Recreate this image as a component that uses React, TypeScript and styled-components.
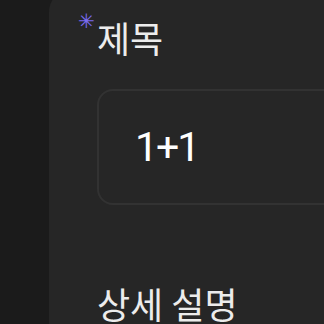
import styled, { createGlobalStyle } from "styled-components";

const GlobalStyle = createGlobalStyle`
  html, body {
    margin: 0;
    padding: 0;
    background: #1b1b1b;
    overflow: hidden;
  }
  body {
    font-family: "Noto Sans CJK KR", "Noto Sans", sans-serif;
  }
`;

const Screen = styled.div`
  display: flex;
  width: 324px;
  height: 324px;
  overflow: hidden;
  background: #1b1b1b;
`;

const SideStrip = styled.div`
  flex: 0 0 49px;
  background: #1b1b1b;
`;

const Panel = styled.div`
  flex: 0 0 640px;
  margin-top: -10px;
  padding: 21px 48px 0 48px;
  background: #262626;
  border-top-left-radius: 22px;
  display: flex;
  flex-direction: column;
`;

const Field = styled.div`
  display: flex;
  flex-direction: column;
  gap: 26px;
`;

const Label = styled.label`
  position: relative;
  font-size: 36px;
  line-height: 52px;
  color: #ececec;
`;

const Asterisk = styled.span`
  position: absolute;
  left: -19px;
  top: 0;
  font-family: "DejaVu Sans", sans-serif;
  font-size: 20px;
  line-height: 20px;
  color: #7a6cf2;
`;

const InputBox = styled.div`
  box-sizing: border-box;
  height: 116px;
  display: flex;
  align-items: center;
  padding: 0 36px;
  border: 2px solid #323232;
  border-radius: 16px;
  background: #262626;
  font-family: Roboto, "Noto Sans", sans-serif;
  font-size: 41px;
  letter-spacing: -2px;
  color: #ffffff;
`;

const SectionLabel = styled.div`
  margin-top: 72px;
  font-size: 36px;
  line-height: 52px;
  color: #ececec;
`;

export default function App() {
  return (
    <>
      <GlobalStyle />
      <Screen>
        <SideStrip />
        <Panel>
          <Field>
            <Label>
              <Asterisk>✳</Asterisk>
              제목
            </Label>
            <InputBox>1+1</InputBox>
          </Field>
          <SectionLabel>상세 설명</SectionLabel>
        </Panel>
      </Screen>
    </>
  );
}
